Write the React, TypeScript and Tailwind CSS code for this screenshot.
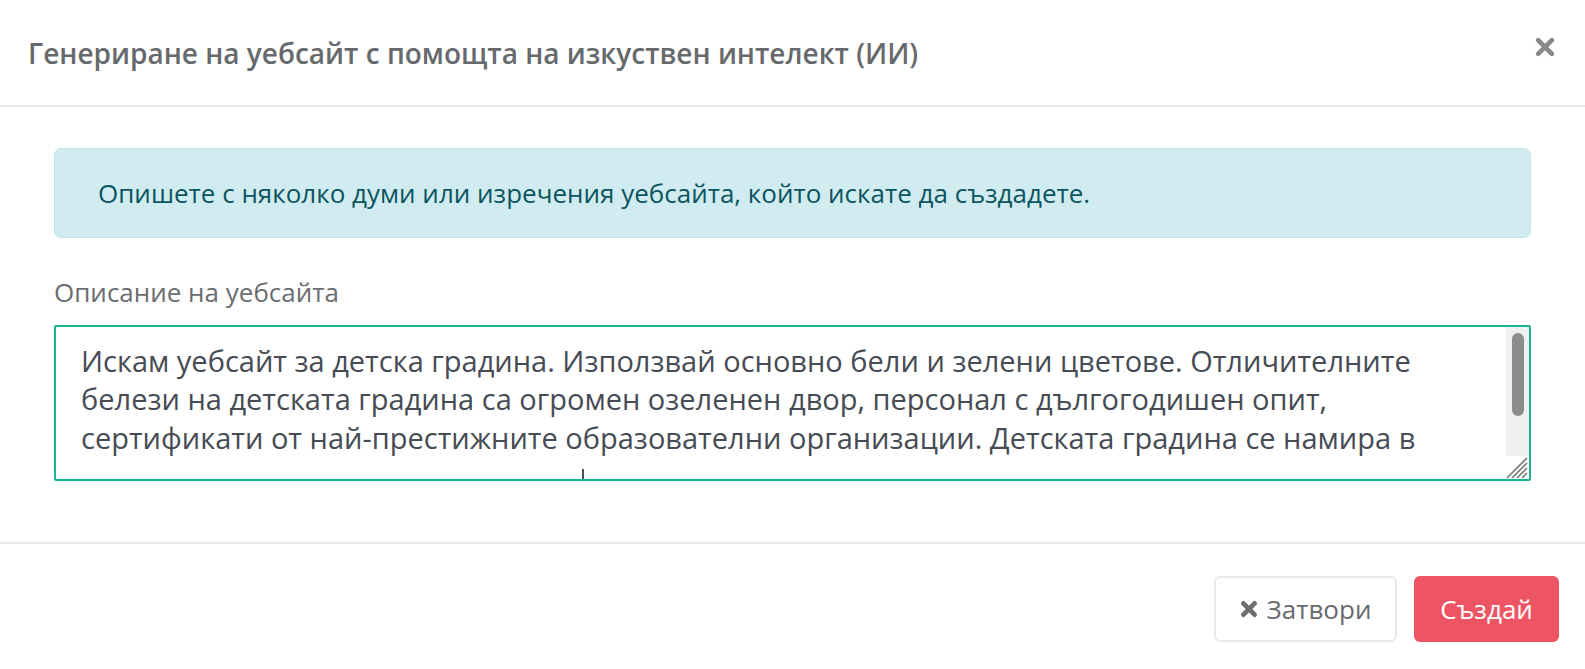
import { useState } from "react";

const FONT = { fontFamily: '"Open Sans", "Noto Sans", sans-serif' };

// 4-ти ред е празен, продължението е под видимата част (затова има скролбар)
const INITIAL =
  "Искам уебсайт за детска градина. Използвай основно бели и зелени цветове. Отличителните\n" +
  "белези на детската градина са огромен озеленен двор, персонал с дългогодишен опит,\n" +
  "сертификати от най-престижните образователни организации. Детската градина се намира в\n" +
  "\n" +
  "центъра на града, в близост до голям парк.";

function TimesIcon({ className, width = 3.6 }: { className?: string; width?: number }) {
  return (
    <svg viewBox="0 0 16 16" className={className} fill="none" stroke="currentColor" strokeWidth={width} strokeLinecap="round">
      <path d="M3 3 L13 13 M13 3 L3 13" />
    </svg>
  );
}

export default function App() {
  const [text, setText] = useState(INITIAL);

  return (
    <div className="min-h-screen w-full bg-white text-[#676a6c]" style={FONT}>
      {/* Заглавие */}
      <div className="flex h-[107px] items-center justify-between border-b-2 border-[#e5e6e7] pl-[28px] pr-[29px]">
        <h4 className="text-[28px] font-semibold text-[#676a6c]">
          Генериране на уебсайт с помощта на изкуствен интелект (ИИ)
        </h4>
        <button className="mb-[12px] text-[#888888]" aria-label="Затвори">
          <TimesIcon className="h-[22px] w-[22px]" width={3.4} />
        </button>
      </div>

      {/* Съдържание */}
      <div className="px-[54px] pb-[61px] pt-[41px]">
        <div className="flex h-[90px] items-center rounded-[7px] border border-[#bee5eb] bg-[#d1ecf1] pl-[43px] text-[26px] text-[#0c5460]">
          Опишете с няколко думи или изречения уебсайта, който искате да създадете.
        </div>

        <label className="mt-[38px] block text-[26px] leading-[32px] text-[#6b6d70]">Описание на уебсайта</label>

        <div className="relative mt-[17px]">
          <textarea
            value={text}
            onChange={(e) => setText(e.target.value)}
            className="block h-[156px] w-full resize-none overflow-y-auto whitespace-pre-wrap rounded-[2px] border-2 border-[#1ab394] pl-[25px] pr-[30px] pt-[15px] text-[29px] leading-[38.3px] text-[#464b54] outline-none"
          />
          {/* скролбар */}
          <div className="pointer-events-none absolute right-[2px] top-[2px] h-[129px] w-[23px] bg-[#eeeff0] pt-[6px]">
            <div className="mx-auto h-[83px] w-[12px] rounded-full bg-[#8c8c8c]" />
          </div>
          {/* дръжка за оразмеряване */}
          <svg className="pointer-events-none absolute bottom-[2px] right-[3px] h-[22px] w-[22px]" viewBox="0 0 22 22" stroke="#7a7a7a" strokeWidth="1.6">
            <path d="M1 21 L21 1 M6 21 L21 6 M11 21 L21 11 M16 21 L21 16" />
          </svg>
          {/* курсор на мишката */}
          <div className="pointer-events-none absolute bottom-[2px] left-[528px] h-[10px] w-[2px] bg-[#4a4f58]" />
        </div>
      </div>

      {/* Бутони */}
      <div className="flex justify-end gap-[17px] border-t-2 border-[#e7eaec] pb-[26px] pr-[26px] pt-[32px]">
        <button className="flex h-[66px] w-[183px] items-center justify-center gap-[9px] rounded-[6px] border-2 border-[#e7eaec] bg-white text-[26px] text-[#676a6c]">
          <TimesIcon className="h-[18px] w-[18px] text-[#6a6c6e]" width={4.2} />
          Затвори
        </button>
        <button className="flex h-[66px] w-[145px] items-center justify-center rounded-[6px] bg-[#ed5565] text-[26px] text-white">
          Създай
        </button>
      </div>
    </div>
  );
}
